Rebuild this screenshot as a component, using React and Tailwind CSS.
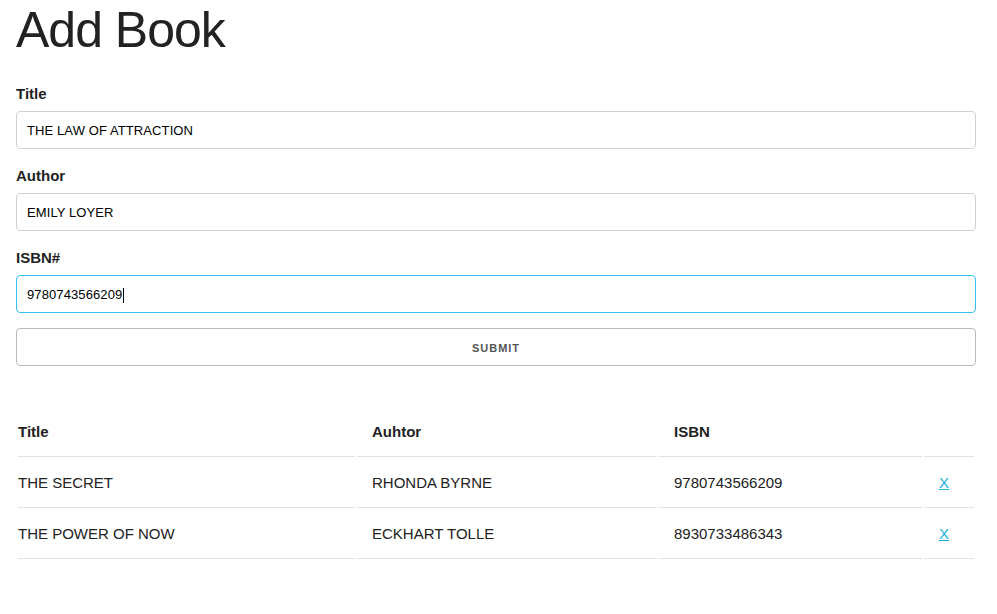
import React from "react";

const font = { fontFamily: '"Liberation Sans", Arial, sans-serif' };

function Field({ label, value, focused }) {
  return (
    <div className="mb-[15px]">
      <label className="block h-[24px] mb-[5px] text-[15px] leading-[24px] font-semibold text-[#222]">{label}</label>
      <div
        className={`h-[38px] w-full rounded-[4px] border bg-white px-[10px] pt-[2px] flex items-center text-[13px] tracking-[0.1px] text-black ${
          focused ? "border-[#33C3F0]" : "border-[#D1D1D1]"
        }`}
      >
        <span>{value}</span>
        {focused && <span className="inline-block w-px h-[15px] bg-black ml-[1px]" />}
      </div>
    </div>
  );
}

export default function App() {
  const rows = [
    ["THE SECRET", "RHONDA BYRNE", "9780743566209"],
    ["THE POWER OF NOW", "ECKHART TOLLE", "8930733486343"],
  ];
  return (
    <div className="min-h-[614px] bg-white text-[#222]" style={font}>
      <div className="w-[960px] ml-[16px]">
        <h1 className="h-[62px] mb-[20px] text-[50px] leading-[60px] font-light tracking-[-1px] text-[#222]">Add Book</h1>
        <Field label="Title" value="THE LAW OF ATTRACTION" />
        <Field label="Author" value="EMILY LOYER" />
        <Field label="ISBN#" value="9780743566209" focused />
        <button className="h-[38px] w-full rounded-[4px] border border-[#bbb] bg-transparent pt-[2px] text-[11px] font-semibold tracking-[1px] uppercase text-[#555] mb-[40px]">
          Submit
        </button>
        <table className="w-[960px] table-fixed border-separate border-spacing-[2px] text-[15px]">
          <colgroup>
            <col className="w-[337px]" />
            <col className="w-[300px]" />
            <col className="w-[263px]" />
            <col className="w-[50px]" />
          </colgroup>
          <thead>
            <tr>
              <th className="text-left font-semibold pl-0 pr-[15px] py-[12px] leading-[24px] border-b border-[#E1E1E1]">Title</th>
              <th className="text-left font-semibold px-[15px] py-[12px] leading-[24px] border-b border-[#E1E1E1]">Auhtor</th>
              <th className="text-left font-semibold px-[15px] py-[12px] leading-[24px] border-b border-[#E1E1E1]">ISBN</th>
              <th className="text-left font-semibold px-[15px] py-[12px] leading-[24px] border-b border-[#E1E1E1]"></th>
            </tr>
          </thead>
          <tbody>
            {rows.map((r) => (
              <tr key={r[0]}>
                <td className="pl-0 pr-[15px] py-[12px] leading-[24px] border-b border-[#E1E1E1]">{r[0]}</td>
                <td className="px-[15px] py-[12px] leading-[24px] border-b border-[#E1E1E1]">{r[1]}</td>
                <td className="px-[15px] py-[12px] leading-[24px] border-b border-[#E1E1E1]">{r[2]}</td>
                <td className="px-[15px] py-[12px] leading-[24px] border-b border-[#E1E1E1]">
                  <a href="#" className="text-[#1EAEDB] underline">X</a>
                </td>
              </tr>
            ))}
          </tbody>
        </table>
      </div>
    </div>
  );
}
